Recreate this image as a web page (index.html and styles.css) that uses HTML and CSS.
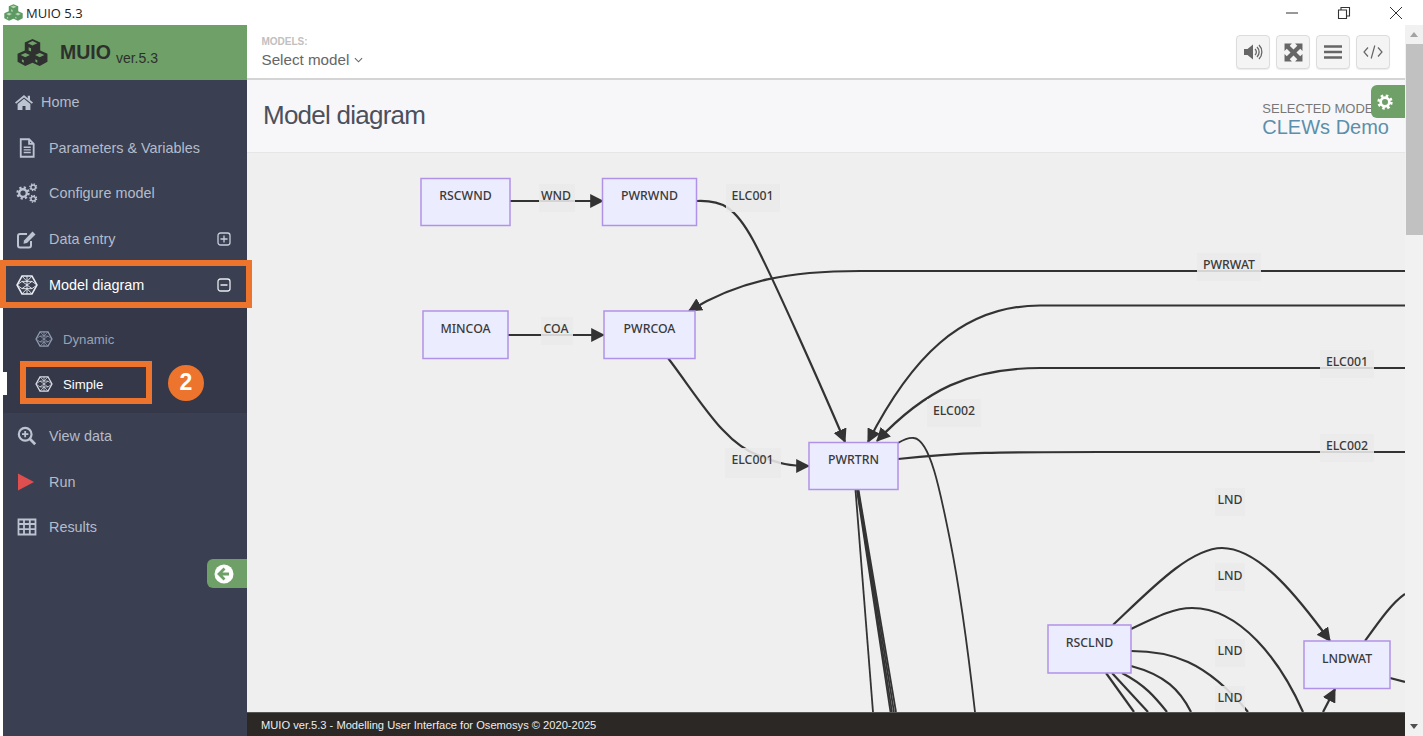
FILE: index.html
```html
<!DOCTYPE html>
<html lang="en">
<head>
    <meta charset="UTF-8">
    <title>MUIO 5.3</title>
    <link rel="stylesheet" href="styles.css">
</head>
<body>

    <!-- shared icons -->
    <svg class="icon-defs" width="0" height="0">
        <defs>
            <symbol id="i-cubes" viewBox="0 0 32 28">
                <path class="cube-side" d="M16 0l8 3.6v8.2l7.5 3.4v8.4L23.500 28 16 24.700 8.500 28 .5 23.600v-8.400L8 11.800V3.600z"/>
                <path class="cube-face" d="M16 2.200l5 2.300-5 2.300-5-2.300zM8.500 14.500l4.800 2.200-4.800 2.200-4.800-2.200zM23.500 14.500l4.800 2.200-4.800 2.200-4.800-2.200z"/>
                <path class="cube-face" d="M5 21l2 1v2.500l-2-1zM19 21l2 1v2.500l-2-1zM12 8.500l2.500 1.200V13l-2.500-1.200z"/>
            </symbol>
            <symbol id="i-hex" viewBox="0 0 24 22">
                <path d="M6.500 1.200h11L23 11l-5.500 9.800h-11L1 11z" fill="none" stroke="currentColor" stroke-width="1.700"/>
                <path d="M6.500 1.200L12 7l5.500-5.800M1 11l5.500-4L12 7l5.500 0 5.500 4M1 11l5.500 4 5.500 0 5.500 0 5.500-4M6.500 20.800L12 15l5.500 5.800M6.500 7l11 8M17.500 7l-11 8M12 1.200v19.600" fill="none" stroke="currentColor" stroke-width="1"/>
            </symbol>
            <symbol id="i-gear" viewBox="0 0 24 24">
                <circle cx="12" cy="12" r="6.500" fill="none" stroke="currentColor" stroke-width="4"/>
                <circle cx="12" cy="12" r="9.500" fill="none" stroke="currentColor" stroke-width="4" stroke-dasharray="3.730 3.730"/>
            </symbol>
            <marker id="arrow" viewBox="0 0 12 12" refX="11" refY="6" markerWidth="14" markerHeight="14" markerUnits="userSpaceOnUse" orient="auto">
                <path d="M0 0L12 6L0 12z" fill="#333"/>
            </marker>
        </defs>
    </svg>

    <div class="titlebar">
        <svg class="title-icon"><use href="#i-cubes"/></svg>
        <span class="title-text">MUIO 5.3</span>
        <div class="win-btns">
            <svg class="win-btn" viewBox="0 0 14 14"><path d="M1 7h12" stroke="#333" stroke-width="1"/></svg>
            <svg class="win-btn" viewBox="0 0 14 14"><path d="M1.500 4h8v8.500h-8zM4 4V1.500h8.500V10H9.500" fill="none" stroke="#333" stroke-width="1.100"/></svg>
            <svg class="win-btn" viewBox="0 0 14 14"><path d="M1 1l12 12M13 1L1 13" stroke="#333" stroke-width="1"/></svg>
        </div>
    </div>

    <div class="app">
        <aside class="sidebar">
            <div class="brand">
                <svg class="brand-icon"><use href="#i-cubes"/></svg>
                <span class="brand-name">MUIO</span>
                <span class="brand-ver">ver.5.3</span>
            </div>

            <nav class="nav">
                <a class="nav-item nav-home">
                    <svg class="nav-icon" viewBox="0 0 24 20"><path d="M12 0L0 10l1.600 1.800L12 3.200l10.400 8.600L24 10l-4-3.300V1h-3v3.200z M12 5L3.500 12v8H10v-5.500h4V20h6.500v-8z" fill="currentColor"/></svg>
                    Home
                </a>
                <a class="nav-item">
                    <svg class="nav-icon" viewBox="0 0 22 24"><path d="M3.500 1.500h10L19 7v15.500H3.500z M13.500 1.500V7H19" fill="none" stroke="currentColor" stroke-width="2.200"/><path d="M7 11h8.500M7 14.200h8.500M7 17.400h8.500" stroke="currentColor" stroke-width="1.700"/></svg>
                    Parameters &amp; Variables
                </a>
                <a class="nav-item">
                    <svg class="nav-icon" viewBox="0 0 22 20">
                        <use href="#i-gear" x="0" y="3" width="14" height="14"/>
                        <use href="#i-gear" x="13" y="0" width="8.500" height="8.500"/>
                        <use href="#i-gear" x="13" y="11.500" width="8.500" height="8.500"/>
                    </svg>
                    Configure model
                </a>
                <a class="nav-item">
                    <svg class="nav-icon" viewBox="0 0 22 20"><path d="M15 12v4.500a2 2 0 0 1-2 2H4a2 2 0 0 1-2-2V7a2 2 0 0 1 2-2h7" fill="none" stroke="currentColor" stroke-width="2"/><path d="M8 11.500L16.500 2.500l3 3L11 14l-3.500.8z" fill="currentColor"/></svg>
                    Data entry
                    <svg class="nav-toggle" viewBox="0 0 14 14"><rect x="1" y="1" width="12" height="12" rx="2.500" fill="none" stroke="currentColor" stroke-width="1.300"/><path d="M3.500 7h7M7 3.500v7" stroke="currentColor" stroke-width="1.300"/></svg>
                </a>
                <a class="nav-item is-active">
                    <svg class="nav-icon nav-icon-hex"><use href="#i-hex"/></svg>
                    Model diagram
                    <svg class="nav-toggle" viewBox="0 0 14 14"><rect x="1" y="1" width="12" height="12" rx="2.500" fill="none" stroke="currentColor" stroke-width="1.300"/><path d="M3.500 7h7" stroke="currentColor" stroke-width="1.500"/></svg>
                    <span class="callout callout-model"></span>
                </a>

                <div class="subnav">
                    <a class="sub-item">
                        <svg class="sub-icon"><use href="#i-hex"/></svg>
                        Dynamic
                    </a>
                    <a class="sub-item is-current">
                        <svg class="sub-icon"><use href="#i-hex"/></svg>
                        Simple
                        <span class="callout callout-simple"></span>
                        <span class="step-badge">2</span>
                    </a>
                </div>

                <a class="nav-item">
                    <svg class="nav-icon" viewBox="0 0 22 22"><circle cx="9" cy="9" r="7" fill="none" stroke="currentColor" stroke-width="2.400"/><path d="M14 14l6 6" stroke="currentColor" stroke-width="3"/><path d="M5.500 9h7M9 5.500v7" stroke="currentColor" stroke-width="2"/></svg>
                    View data
                </a>
                <a class="nav-item">
                    <svg class="nav-icon" viewBox="0 0 22 20"><path d="M2 1.500L18 10 2 18.500z" fill="#e04f4f"/></svg>
                    Run
                </a>
                <a class="nav-item">
                    <svg class="nav-icon" viewBox="0 0 22 20"><path d="M2.500 2.500h17v15h-17z M2.500 7h17M2.500 12.200h17M8 2.500v15M13.800 2.500v15" fill="none" stroke="currentColor" stroke-width="1.800"/></svg>
                    Results
                </a>
            </nav>

            <button class="collapse-btn">
                <svg viewBox="0 0 20 20" width="20" height="20"><circle cx="10" cy="10" r="9.500" fill="#fff"/><path d="M10.500 4.500L5 10l5.500 5.500M5.500 10H15" fill="none" stroke="#6fa067" stroke-width="2.800"/></svg>
            </button>
        </aside>

        <main class="main">
            <header class="topbar">
                <div class="model-picker">
                    <div class="model-label">MODELS:</div>
                    <div class="model-select">
                        Select model
                        <svg viewBox="0 0 10 6" width="9" height="6"><path d="M1 1l4 4 4-4" fill="none" stroke="#666" stroke-width="1.200"/></svg>
                    </div>
                </div>
                <div class="tools">
                    <button class="tool-btn">
                        <svg viewBox="0 0 20 18" width="20" height="18"><path d="M1 6h3.500L10 1.500v15L4.500 12H1z" fill="currentColor"/><path d="M12 6a4 4 0 0 1 0 6M14 4a7 7 0 0 1 0 10M16 2a10 10 0 0 1 0 14" fill="none" stroke="currentColor" stroke-width="1.300"/></svg>
                    </button>
                    <button class="tool-btn">
                        <svg viewBox="0 0 18 18" width="19" height="19"><path d="M.5.500h7L5.400 2.600 9 6.200l3.600-3.600L10.500.500h7v7l-2.100-2.100L11.800 9l3.600 3.600 2.100-2.100v7h-7l2.100-2.100L9 11.800l-3.600 3.600 2.100 2.100h-7v-7l2.100 2.100L6.200 9 2.600 5.400.5 7.500z" fill="currentColor"/></svg>
                    </button>
                    <button class="tool-btn">
                        <svg viewBox="0 0 18 16" width="18" height="16"><path d="M0 2.500h18M0 8h18M0 13.500h18" stroke="currentColor" stroke-width="2.600"/></svg>
                    </button>
                    <button class="tool-btn">
                        <svg viewBox="0 0 20 14" width="20" height="14"><path d="M5 2.500L1 7l4 4.500M15 2.500L19 7l-4 4.500M11.800 .5L8.200 13.500" fill="none" stroke="currentColor" stroke-width="1.200"/></svg>
                    </button>
                </div>
            </header>

            <section class="page-head">
                <h1 class="page-title">Model diagram</h1>
                <div class="selected">
                    <div class="selected-label">SELECTED MODEL</div>
                    <div class="selected-name">CLEWs Demo</div>
                </div>
                <button class="settings-btn"><svg width="16" height="16"><use href="#i-gear"/></svg></button>
            </section>

            <section class="canvas">
                <!-- viewBox uses screen coords so the graph is easier to read off -->
                <svg class="diagram" viewBox="247 153 1158 559" width="1158" height="559">
                    <g class="edges">
                        <path d="M510 201H603" marker-end="url(#arrow)"/>
                        <path d="M508 335H604" marker-end="url(#arrow)"/>
                        <path d="M697 201C722 200 735 207 753 240S825 395 845 442" marker-end="url(#arrow)"/>
                        <path d="M1405 271H860C790 271 740 280 689 311" marker-end="url(#arrow)"/>
                        <path d="M1405 305.500H1040C960 305.500 910 360 868 442" marker-end="url(#arrow)"/>
                        <path d="M1405 368H1040C970 368 925 390 877 441" marker-end="url(#arrow)"/>
                        <path d="M668 358C700 400 725 445 760 456C780 464 790 466 809 466" marker-end="url(#arrow)"/>
                        <path d="M898 459C960 452 1000 452 1100 452H1405"/>
                        <path d="M898 443Q908 437 914 438C930 440 940 490 950 540S968 650 975 712" class="thin"/>
                        <path d="M855.500 490L873 712" class="thin"/>
                        <path d="M857 490L890.500 712" class="thin"/>
                        <path d="M857.500 490L892 712" class="thin"/>
                        <path d="M858 490L894 712" class="thin"/>
                        <path d="M858.500 490L896 712" class="thin"/>
                        <path d="M1113 625C1150 590 1190 548 1222 548C1260 548 1300 600 1330 641" marker-end="url(#arrow)"/>
                        <path d="M1131 629C1160 615 1175 608 1192 608C1240 608 1280 660 1303 712"/>
                        <path d="M1131 651C1170 651 1205 660 1248 712"/>
                        <path d="M1131 666C1165 675 1180 690 1191 712"/>
                        <path d="M1122 673C1145 685 1155 697 1167 712"/>
                        <path d="M1112 673L1148 712"/>
                        <path d="M1106 673L1134 712"/>
                        <path d="M1323 712L1335 689" marker-end="url(#arrow)"/>
                        <path d="M1365 641C1380 620 1392 603 1405 594"/>
                        <path d="M1390 678L1405 682"/>
                    </g>

                    <g class="edge-labels">
                        <g><rect x="539" y="184" width="36" height="28"/><text x="556" y="200">WND</text></g>
                        <g><rect x="726" y="184" width="54" height="28"/><text x="752.500" y="200">ELC001</text></g>
                        <g><rect x="541" y="317" width="32" height="28"/><text x="556" y="333">COA</text></g>
                        <g><rect x="1197" y="253" width="64" height="28"/><text x="1229" y="269">PWRWAT</text></g>
                        <g><rect x="1320" y="350" width="54" height="28"/><text x="1347" y="366">ELC001</text></g>
                        <g><rect x="1320" y="434" width="54" height="28"/><text x="1347" y="450">ELC002</text></g>
                        <g><rect x="927" y="399" width="54" height="28"/><text x="954" y="415">ELC002</text></g>
                        <g><rect x="725" y="448" width="56" height="30"/><text x="752.500" y="464">ELC001</text></g>
                        <g><rect x="1215" y="488" width="30" height="28"/><text x="1230" y="504">LND</text></g>
                        <g><rect x="1215" y="563" width="30" height="28"/><text x="1230" y="579.500">LND</text></g>
                        <g><rect x="1215" y="639" width="30" height="28"/><text x="1230" y="655">LND</text></g>
                        <g><rect x="1215" y="686" width="30" height="26"/><text x="1230" y="702">LND</text></g>
                    </g>

                    <g class="nodes">
                        <g><rect x="421" y="178.500" width="89" height="47"/><text x="465.500" y="200">RSCWND</text></g>
                        <g><rect x="602.500" y="178.500" width="94" height="47"/><text x="649.500" y="200">PWRWND</text></g>
                        <g><rect x="423" y="311" width="85" height="47.500"/><text x="465.500" y="333">MINCOA</text></g>
                        <g><rect x="604" y="311" width="91" height="47.500"/><text x="649.500" y="333">PWRCOA</text></g>
                        <g><rect x="809" y="442.500" width="89" height="47"/><text x="853.500" y="464">PWRTRN</text></g>
                        <g><rect x="1048" y="625" width="83" height="48"/><text x="1089.500" y="647">RSCLND</text></g>
                        <g><rect x="1304" y="641" width="86" height="47.500"/><text x="1347" y="663">LNDWAT</text></g>
                    </g>
                </svg>
            </section>

            <footer class="footer">MUIO ver.5.3 - Modelling User Interface for Osemosys © 2020-2025</footer>
        </main>

        <div class="scrollbar">
            <span class="scroll-arrow scroll-up"></span>
            <span class="scroll-thumb"></span>
            <span class="scroll-arrow scroll-down"></span>
        </div>
    </div>

</body>
</html>
```

FILE: styles.css
```css
* {
    box-sizing: border-box;
}
html, body {
    margin: 0;
    height: 100%;
}
body {
    font-family: "Liberation Sans", Arial, sans-serif;
    background: #fff;
    display: flex;
    flex-direction: column;
    height: 736px;
    overflow: hidden;
}
.icon-defs {
    position: absolute;
}
button {
    font-family: inherit;
    cursor: pointer;
}

/* window title */
.titlebar {
    height: 25px;
    flex: none;
    display: flex;
    align-items: center;
    padding-left: 4px;
}
.title-icon {
    width: 19px;
    height: 17px;
    --side: #5d9a63;
    --face: #b5d6ae;
    fill: #5d9a63;
}
.title-text {
    font-family: "Open Sans", sans-serif;
    font-size: 13px;
    color: #222;
    margin-left: 3px;
}
.win-btns {
    margin-left: auto;
    display: flex;
    gap: 38px;
    padding-right: 20px;
}
.win-btn {
    width: 14px;
    height: 14px;
}

.app {
    flex: 1;
    display: flex;
    min-height: 0;
}

/* sidebar */
.sidebar {
    width: 244px;
    margin-left: 3px;
    flex: none;
    background: #3a3f51;
    position: relative;
    z-index: 2;
}
.brand {
    height: 54.500px;
    background: #6fa067;
    display: flex;
    align-items: center;
    padding-left: 14px;
    color: #2d302d;
}
.brand-icon {
    width: 31px;
    height: 27px;
    margin-right: 12px;
}
.cube-side {
    fill: var(--side, #2e312f);
}
.cube-face {
    fill: var(--face, #6fa067);
}
.brand-name {
    font-size: 19.500px;
    font-weight: 700;
    margin-top: 0;
}
.brand-ver {
    font-size: 14px;
    margin-left: 5px;
    margin-top: 12px;
}
.nav-item {
    height: 45.600px;
    display: flex;
    align-items: center;
    padding-left: 13px;
    padding-right: 16px;
    font-size: 14.400px;
    color: #b4bccb;
    position: relative;
}
.nav-icon {
    width: 22px;
    height: 20px;
    margin-right: 11px;
    flex: none;
    color: #bcc4d2;
}
.nav-home .nav-icon {
    width: 18px;
    height: 15px;
    margin-left: -1px;
    margin-right: 8px;
}
.nav-toggle {
    width: 14px;
    height: 14px;
    margin-left: auto;
    color: #c8cedb;
}
.is-active {
    color: #fff;
}
.is-active .nav-icon,
.is-active .nav-toggle {
    color: #e8ebf0;
}
.subnav {
    background: #343848;
    height: 106px;
    padding-top: 9.500px;
}
.sub-item {
    height: 45px;
    display: flex;
    align-items: center;
    padding-left: 32px;
    font-size: 13.200px;
    color: #97a2b5;
    position: relative;
}
.sub-icon {
    width: 18px;
    height: 16px;
    margin-right: 10px;
    color: #8f9bb0;
}
.is-current {
    color: #fff;
}
.is-current .sub-icon {
    color: #d8dce4;
}
.is-current::before {
    content: "";
    position: absolute;
    left: -3px;
    top: 10px;
    width: 7px;
    height: 23px;
    background: #fff;
}

/* orange annotations from the guide */
.callout {
    position: absolute;
    border: 6px solid #ed742d;
}
.callout-model {
    left: -3px;
    top: -2px;
    width: 252px;
    height: 48px;
}
.callout-simple {
    left: 17px;
    top: -1px;
    width: 132px;
    height: 43px;
}
.step-badge {
    position: absolute;
    left: 165px;
    top: 3px;
    width: 36px;
    height: 36px;
    border-radius: 50%;
    background: #ed742d;
    color: #fff;
    font-size: 23px;
    font-weight: 700;
    display: flex;
    align-items: center;
    justify-content: center;
}
.collapse-btn {
    position: absolute;
    right: 0;
    top: 534px;
    width: 40px;
    height: 29px;
    border: none;
    padding: 0 6px 0 0;
    background: #6fa067;
    border-radius: 6px 0 0 6px;
    display: flex;
    align-items: center;
    justify-content: center;
}

/* main column */
.main {
    flex: 1;
    display: flex;
    flex-direction: column;
    min-width: 0;
}
.topbar {
    height: 55px;
    flex: none;
    display: flex;
    align-items: center;
    justify-content: space-between;
    padding: 1px 15px 0 14.500px;
    background: #fff;
    border-bottom: 2px solid #d4d4d4;
}
.model-label {
    font-size: 10px;
    font-weight: 700;
    color: #c0c0c0;
    margin-bottom: 4px;
}
.model-select {
    font-size: 15.200px;
    color: #666;
    display: flex;
    align-items: center;
    gap: 5px;
}
.tools {
    display: flex;
    gap: 6px;
}
.tool-btn {
    width: 34px;
    height: 34px;
    padding: 0;
    display: flex;
    align-items: center;
    justify-content: center;
    background: #f4f4f4;
    border: 1px solid #dcdcdc;
    border-radius: 4px;
    box-shadow: 0 1px 1px rgba(0, 0, 0, 0.08);
    color: #666;
}
.page-head {
    height: 73px;
    flex: none;
    position: relative;
    display: flex;
    align-items: center;
    justify-content: space-between;
    padding: 0 16px;
    background: #f7f7f9;
    border-bottom: 1px solid #e6e6e6;
}
.page-title {
    margin: 0;
    font-size: 26px;
    font-weight: 400;
    letter-spacing: -0.750px;
    color: #4c505c;
    margin-top: -2px;
}
.selected {
    margin-top: 6px;
    line-height: 1;
}
.selected-label {
    font-size: 13px;
    color: #777;
}
.selected-name {
    font-size: 20px;
    color: #5b8fab;
    margin-top: 2px;
}
.settings-btn {
    position: absolute;
    right: 0;
    top: 5px;
    width: 34px;
    height: 33px;
    padding: 0 6px 0 0;
    border: none;
    background: #6fa067;
    color: #fff;
    border-radius: 6px 0 0 6px;
    display: flex;
    align-items: center;
    justify-content: center;
}

/* graph */
.canvas {
    flex: 1;
    min-height: 0;
    background: #efefef;
    overflow: hidden;
}
.diagram {
    display: block;
}
.edges path {
    fill: none;
    stroke: #333;
    stroke-width: 2.200;
}
.edges .thin {
    stroke-width: 1.800;
}
.edge-labels rect {
    fill: #ebebeb;
    fill-opacity: 0.880;
}
.edge-labels text,
.nodes text {
    font-family: "Noto Sans", sans-serif;
    font-size: 12.300px;
    font-weight: 500;
    fill: #3a3a3a;
    text-anchor: middle;
}
.nodes rect {
    fill: #ececff;
    stroke: #b292e8;
    stroke-width: 1.500;
}
.footer {
    height: 24px;
    flex: none;
    background: #2b2825;
    border-top: 1px solid #555;
    color: #eee;
    font-size: 11.130px;
    padding-left: 14px;
    line-height: 24px;
}

/* fake scrollbar on the right */
.scrollbar {
    width: 18px;
    flex: none;
    background: #f1f1f1;
    position: relative;
}
.scroll-thumb {
    position: absolute;
    left: 1px;
    right: 0;
    top: 19px;
    height: 191px;
    background: #c1c1c1;
}
.scroll-arrow {
    position: absolute;
    left: 5px;
    border-left: 4px solid transparent;
    border-right: 4px solid transparent;
}
.scroll-up {
    top: 7px;
    border-bottom: 5px solid #a3a3a3;
}
.scroll-down {
    bottom: 7px;
    border-top: 5px solid #505050;
}
```
